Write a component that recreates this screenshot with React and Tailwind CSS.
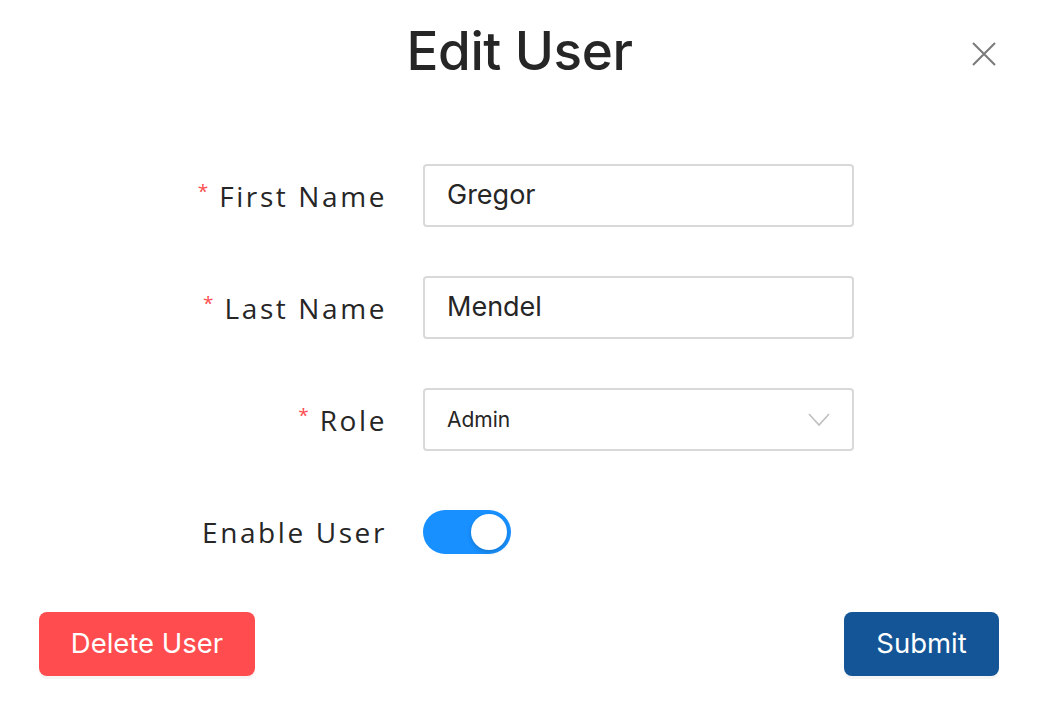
import React from "react";

function Row({ label, required, children }) {
  return (
    <div className="flex items-center h-[63px]">
      <div className="w-[348px] flex justify-end items-center text-[28px] tracking-[2.6px] text-[#262626] font-['Open_Sans',sans-serif]">
        {required && <span className="text-[#ff4d4f] text-[19px] mr-[11px] -mt-[8px] tracking-normal">*</span>}
        <span>{label}</span>
      </div>
      <div className="ml-[36px] w-[431px] h-full">{children}</div>
    </div>
  );
}

export default function App() {
  return (
    <div className="w-[1040px] h-[712px] bg-white relative font-['Inter',sans-serif] pl-[39px] pr-[41px]">
      <div className="h-[104px] flex items-center justify-center relative">
        <h1 className="text-[53px] font-medium text-[#262626] tracking-[-0.4px] leading-none mt-[-2px] ml-[1px]">Edit User</h1>
        <button className="absolute right-[2px] top-[41px] w-[26px] h-[26px] flex items-center justify-center">
          <svg width="24" height="24" viewBox="0 0 24 24" stroke="#7a7a7a" strokeWidth="2" fill="none">
            <path d="M1 1 L23 23 M23 1 L1 23" />
          </svg>
        </button>
      </div>
      <div className="mt-[60px] flex flex-col gap-[49px]">
        <Row label="First Name" required>
          <div className="h-full border-2 border-[#d9d9d9] rounded-[4px] flex items-center px-[22px] text-[27px] text-[#262626]">Gregor</div>
        </Row>
        <Row label="Last Name" required>
          <div className="h-full border-2 border-[#d9d9d9] rounded-[4px] flex items-center px-[22px] text-[27px] text-[#262626]">Mendel</div>
        </Row>
        <Row label="Role" required>
          <div className="h-full border-2 border-[#d9d9d9] rounded-[4px] flex items-center justify-between pl-[22px] pr-[22px] text-[21px] text-[#262626]">
            <span>Admin</span>
            <svg width="22" height="14" viewBox="0 0 22 14" fill="none" stroke="#bfbfbf" strokeWidth="1.6">
              <path d="M1 1 L11 12 L21 1" />
            </svg>
          </div>
        </Row>
        <Row label="Enable User">
          <div className="h-full flex items-center">
            <div className="w-[88px] h-[44px] rounded-full bg-[#1890ff] relative">
              <div className="absolute right-[4px] top-[4px] w-[36px] h-[36px] rounded-full bg-white shadow-[0_2px_4px_rgba(0,35,11,0.2)]"></div>
            </div>
          </div>
        </Row>
      </div>
      <div className="mt-[49px] flex justify-between">
        <button className="w-[216px] h-[64px] rounded-[8px] bg-[#ff4d4f] text-white text-[27.5px] shadow-[0_3px_0_rgba(0,0,0,0.04)]">Delete User</button>
        <button className="w-[155px] h-[64px] rounded-[8px] bg-[#135596] text-white text-[27.5px] shadow-[0_3px_0_rgba(0,0,0,0.04)]">Submit</button>
      </div>
    </div>
  );
}
